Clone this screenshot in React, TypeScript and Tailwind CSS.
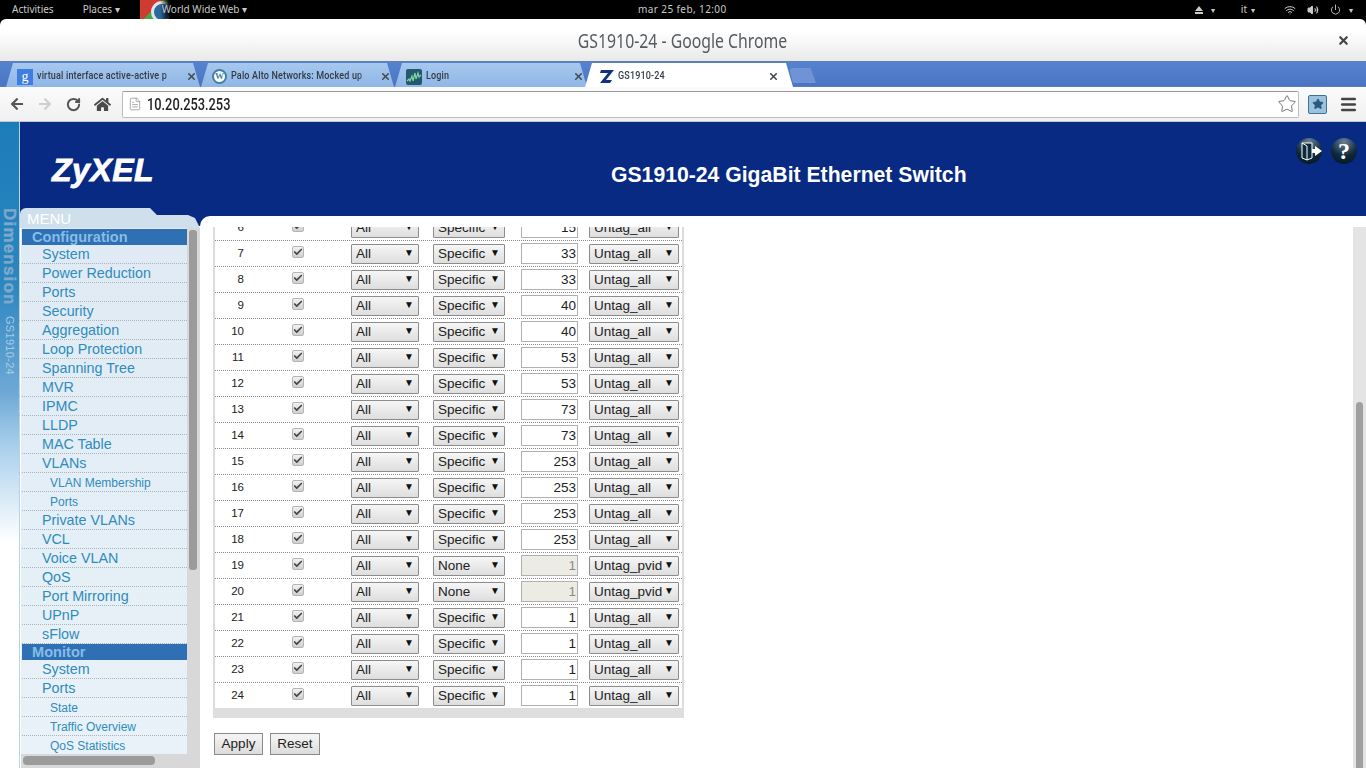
import { Check, FileText, Menu, RotateCw, Star, X, Wifi, Volume2, Power } from "lucide-react";
import { FaArrowLeft, FaArrowRight, FaHome } from "react-icons/fa";

const sans = "font-['Liberation_Sans',Arial,sans-serif]";

const ports = [
  { n: 6, pvid: "15" },
  { n: 7, pvid: "33" },
  { n: 8, pvid: "33" },
  { n: 9, pvid: "40" },
  { n: 10, pvid: "40" },
  { n: 11, pvid: "53" },
  { n: 12, pvid: "53" },
  { n: 13, pvid: "73" },
  { n: 14, pvid: "73" },
  { n: 15, pvid: "253" },
  { n: 16, pvid: "253" },
  { n: 17, pvid: "253" },
  { n: 18, pvid: "253" },
  { n: 19, pvid: "1", none: true },
  { n: 20, pvid: "1", none: true },
  { n: 21, pvid: "1" },
  { n: 22, pvid: "1" },
  { n: 23, pvid: "1" },
  { n: 24, pvid: "1" },
];

const configMenu = [
  { label: "System" },
  { label: "Power Reduction" },
  { label: "Ports" },
  { label: "Security" },
  { label: "Aggregation" },
  { label: "Loop Protection" },
  { label: "Spanning Tree" },
  { label: "MVR" },
  { label: "IPMC" },
  { label: "LLDP" },
  { label: "MAC Table" },
  { label: "VLANs" },
  { label: "VLAN Membership", sub: true },
  { label: "Ports", sub: true },
  { label: "Private VLANs" },
  { label: "VCL" },
  { label: "Voice VLAN" },
  { label: "QoS" },
  { label: "Port Mirroring" },
  { label: "UPnP" },
  { label: "sFlow" },
];

const monitorMenu = [
  { label: "System" },
  { label: "Ports" },
  { label: "State", sub: true },
  { label: "Traffic Overview", sub: true },
  { label: "QoS Statistics", sub: true },
];

function TopBar() {
  return (
    <div className="relative flex h-[19px] shrink-0 items-center bg-black text-[10px] text-[#c9c9c9] font-['Noto_Sans',sans-serif]">
      <span className="ml-3">Activities</span>
      <span className="ml-[29px]">Places ▾</span>
      <div className="relative ml-[20px] h-[19px] w-[30px] overflow-hidden">
        <div className="absolute left-0 top-0 h-full w-full bg-[linear-gradient(135deg,#cf3b30_45%,#45a748_45%)]" />
        <div className="absolute left-[11px] top-[1px] h-[22px] w-[22px] rounded-full border-[3px] border-[#dfe6ea] bg-[#2c6a9c]" />
        <div className="absolute left-[20px] top-0 h-full w-[10px] bg-[linear-gradient(90deg,transparent,#000)]" />
      </div>
      <span className="ml-[-8px] relative">World Wide Web ▾</span>
      <span className="absolute left-[638px] top-[2px] tracking-[0.4px]">mar 25 feb, 12:00</span>
      <div className="ml-auto mr-[13px] flex items-center">
        <svg width="8" height="8" viewBox="0 0 8 8" className="mr-[8px]">
          <path d="M4 0L8 5H0z M0 6h8v2H0z" fill="#c9c9c9" />
        </svg>
        <span className="mr-[26px] text-[8px]">▾</span>
        <span className="mr-[4px]">it</span>
        <span className="mr-[29px] text-[8px]">▾</span>
        <Wifi size={12} className="mr-[11px]" />
        <Volume2 size={12} className="mr-[11px] fill-[#c9c9c9]" />
        <Power size={11} className="mr-[8px]" />
        <span className="text-[8px]">▾</span>
      </div>
    </div>
  );
}

function TitleBar() {
  return (
    <div className="bg-black shrink-0">
      <div className="relative flex h-[42px] items-center justify-center rounded-t-[6px] bg-[linear-gradient(#ffffff_30%,#e9e9e9)]">
        <span className="mt-[2px] text-[20px] text-[#555b5e] font-['Noto_Sans',sans-serif] [transform:scaleX(0.79)]">
          GS1910-24 - Google Chrome
        </span>
        <X size={13} strokeWidth={4} className="absolute right-[16px] top-[15px] text-[#444]" />
      </div>
    </div>
  );
}

function Tab({ title, icon, active, className }: { title: string; icon: React.ReactNode; active?: boolean; className: string }) {
  return (
    <div
      className={`relative flex h-[24px] items-center rounded-t-[5px] pt-[3px] [clip-path:polygon(0_100%,7px_0,calc(100%-7px)_0,100%_100%)] ${className} ${
        active ? "z-10 bg-white" : "bg-[linear-gradient(#a6c8ee,#8fb6e6)]"
      }`}
    >
      {icon}
      <div className="ml-[4px] min-w-0 flex-1 overflow-hidden [mask-image:linear-gradient(90deg,#000_88%,transparent)]">
        <span className="block origin-left whitespace-nowrap text-[11px] font-medium tracking-[0.2px] text-[#333b44] font-['Roboto',sans-serif] [transform:scaleX(0.82)]">
          {title}
        </span>
      </div>
      <X size={11} strokeWidth={3.5} className="ml-[6px] shrink-0 text-[#444c55]" />
    </div>
  );
}

function TabStrip() {
  return (
    <div className="flex h-[26px] shrink-0 items-end gap-[1px] border-t border-[#5d7fa9] bg-[linear-gradient(#5583d0,#4a74c2)] pl-[6px] shadow-[inset_0_-1px_0_#5a7fb8]">
      <Tab
        className="w-[194px] pl-[11px] pr-[3px]"
        title="virtual interface active-active p"
        icon={<span className="flex h-[16px] w-[16px] shrink-0 items-center justify-center bg-[#3f7de0] text-[14px] leading-none text-white font-['Liberation_Serif',serif]">g</span>}
      />
      <Tab
        className="w-[193px] pl-[11px] pr-[3px]"
        title="Palo Alto Networks: Mocked up"
        icon={<span className="flex h-[15px] w-[15px] shrink-0 items-center justify-center rounded-full border-2 border-[#3f7ea6] bg-white text-[9px] font-bold leading-none text-[#3f7ea6] font-['Liberation_Serif',serif]">W</span>}
      />
      <Tab
        className="w-[192px] pl-[11px] pr-[3px]"
        title="Login"
        icon={
          <svg width="16" height="16" viewBox="0 0 16 16" className="shrink-0">
            <rect width="16" height="16" rx="2" fill="#24586e" />
            <path d="M1 12l2-2 1 2 2-5 1 5 2-8 1 6 2-6 1 4 2-2" stroke="#7fd3a0" fill="none" strokeWidth="1.2" />
          </svg>
        }
      />
      <Tab
        active
        className="-ml-[3px] w-[208px] pl-[15px] pr-[14px]"
        title="GS1910-24"
        icon={
          <svg width="14" height="13" viewBox="0 0 14 13" className="shrink-0">
            <path d="M1 0h13l-8 10h6l-2 3H0l8-10H0z" fill="#12327f" />
          </svg>
        }
      />
      <div className="mb-[4px] -ml-[5px] h-[15px] w-[27px] rounded-t-[4px] bg-[#6f93d6] [clip-path:polygon(0_0,80%_0,100%_100%,15%_100%)]" />
    </div>
  );
}

function Toolbar() {
  return (
    <div className="flex h-[35px] shrink-0 items-center border-b border-[#c4c8d0] bg-[linear-gradient(#fbfbfb,#f0f0f0)] pl-[10px] pr-[8px]">
      <FaArrowLeft size={14} className="text-[#555]" />
      <FaArrowRight size={14} className="ml-[14px] text-[#cfcfcf]" />
      <RotateCw size={15} strokeWidth={3.2} className="ml-[14px] text-[#555]" />
      <FaHome size={17} className="ml-[13px] text-[#4a4a4a]" />
      <div className="ml-[11px] flex h-[27px] flex-1 items-center rounded-[2px] border border-[#bdbdbd] border-t-[#9a9a9a] bg-white pl-[5px] pr-[1px]">
        <FileText size={14} strokeWidth={1.2} className="text-[#888]" />
        <span className="ml-[5px] mt-[1px] origin-left text-[16px] font-medium text-[#222] font-['Roboto',sans-serif] [transform:scaleX(0.8)]">10.20.253.253</span>
        <Star size={20} strokeWidth={1.2} className="ml-auto text-[#777]" />
      </div>
      <div className="ml-[9px] flex h-[19px] w-[19px] items-center justify-center rounded-[2px] border border-[#3f7296] bg-[#9cc3dd]">
        <Star size={12} className="fill-[#2b5a80] text-[#2b5a80]" />
      </div>
      <Menu size={19} strokeWidth={3} className="ml-[12px] text-[#444]" />
    </div>
  );
}

function LeftStrip() {
  return (
    <div className="flex w-[20px] shrink-0 flex-col items-center border-r border-[#b7d3e6] bg-[linear-gradient(#1b7db8_0%,#2c86bf_25%,#6fa9d6_42%,#a8cfec_50%,#ffffff_65%)] pt-[86px]">
      <span className={`text-[17px] font-bold leading-none tracking-[1.2px] text-[#7ea8cc] [-webkit-text-stroke:0.4px_#7ea8cc] [writing-mode:vertical-rl] ${sans}`}>Dimension</span>
      <span className={`mt-[10px] text-[11px] leading-none tracking-[0.3px] text-[#a9cbe4] [writing-mode:vertical-rl] ${sans}`}>GS1910-24</span>
    </div>
  );
}

function Header() {
  return (
    <div className="relative flex h-[94px] shrink-0 items-start bg-[#082a82]">
      <span className={`ml-[32px] mt-[29px] text-[32px] font-bold italic leading-[38px] tracking-[0.5px] text-white [-webkit-text-stroke:0.8px_white] ${sans}`}>
        ZyXEL
      </span>
      <span className={`absolute left-[591px] top-[40px] text-[21.2px] font-bold leading-[26px] text-white ${sans}`}>
        GS1910-24 GigaBit Ethernet Switch
      </span>
      <div className="ml-auto mr-[9px] mt-[16px] flex gap-[9px]">
        <div className="relative h-[26px] w-[26px] rounded-full bg-[radial-gradient(circle_at_50%_15%,#6d8296,#0e2a3c_55%,#05131f)]">
          <svg width="26" height="26" viewBox="0 0 26 26" className="absolute left-[1px] top-0">
            <path d="M5 5h10v15l-5 2-5-2z" fill="#0c2a3c" stroke="#fff" strokeWidth="1" />
            <path d="M5 5l5 3v14" fill="none" stroke="#fff" strokeWidth="1" />
            <path d="M15 11h3V8l7 5-7 5v-3h-3z" fill="#fff" />
          </svg>
        </div>
        <div className="flex h-[26px] w-[26px] items-center justify-center rounded-full bg-[radial-gradient(circle_at_50%_15%,#6d8296,#0e2a3c_55%,#05131f)] font-['Liberation_Serif',serif] text-[24px] font-bold leading-none text-white">
          ?
        </div>
      </div>
    </div>
  );
}

function MenuRow({ label, sub }: { label: string; sub?: boolean }) {
  return (
    <div
      className={`flex h-[19px] items-center border-b border-dotted border-[#a9b4bc] ${
        sub ? "pl-[28px] pt-[2px] text-[12px]" : "pl-[20px] pt-[1px] text-[14.3px]"
      } text-[#2f8cbd] whitespace-nowrap`}
    >
      {label}
    </div>
  );
}

function MenuHead({ label }: { label: string }) {
  return <div className="flex h-[16px] items-center bg-[#2f6fb3] pl-[10px] text-[14.6px] font-bold leading-none text-[#85bde8]">{label}</div>;
}

function Sidebar() {
  return (
    <div className={`relative z-10 -mt-[8px] flex h-[560px] w-[180px] shrink-0 flex-col ${sans}`}>
      {/* menu tab */}
      <div className="h-[20px] shrink-0 rounded-tl-[6px] bg-[#cfe0ec] pl-[7px] text-[15px] leading-[21px] text-white [clip-path:polygon(0_0,130px_0,137px_7px,168px_7px,175px_10px,180px_20px,0_20px)]">
        MENU
      </div>
      <div className="flex min-h-0 flex-1 pl-[1px]">
        <div className="flex min-w-0 flex-1 flex-col">
          <div className="flex min-h-0 flex-1">
            <div className="min-h-0 w-[166px] overflow-hidden bg-[linear-gradient(#dfeaf4,#e9f2f8)] pl-[1px] pt-[1px]">
              <MenuHead label="Configuration" />
              {configMenu.map((m, i) => (
                <MenuRow key={i} label={m.label} sub={m.sub} />
              ))}
              <MenuHead label="Monitor" />
              {monitorMenu.map((m, i) => (
                <MenuRow key={i} label={m.label} sub={m.sub} />
              ))}
            </div>
            <div className="flex-1 bg-[#d8d8d8] pl-[2px] pt-[2px]">
              <div className="h-[340px] w-[8px] rounded-[3px] bg-[#9b9b9b]" />
            </div>
          </div>
          <div className="h-[14px] shrink-0 bg-[#d8d8d8] pl-[2px] pt-[2px]">
            <div className="h-[9px] w-[132px] rounded-[4px] bg-[#9b9b9b]" />
          </div>
        </div>
      </div>
    </div>
  );
}

function Sel({ value, options, w }: { value: string; options: string[]; w: string }) {
  return (
    <div className={`relative h-[20px] shrink-0 ${w}`}>
      <select
        defaultValue={value}
        className="block h-full w-full appearance-none rounded-[1px] border border-[#8c8c8c] bg-[linear-gradient(#f6f6f6,#dedede)] pl-[4px] text-[13.5px] leading-[18px] text-[#222] outline-none"
      >
        {options.map((o) => (
          <option key={o}>{o}</option>
        ))}
      </select>
      <span className="pointer-events-none absolute right-[5px] top-[1px] text-[10px] leading-[16px] text-[#111]">▼</span>
    </div>
  );
}

function Row({ n, pvid, none, last }: { n: number; pvid: string; none?: boolean; last?: boolean }) {
  return (
    <div className={`flex items-center ${last ? "h-[25px]" : "h-[26px] border-b border-dotted border-[#8a8a8a]"}`}>
      <span className="w-[29px] shrink-0 text-right text-[11.5px] text-[#222]">{n}</span>
      <div className="mb-[3px] ml-[48px] flex h-[12px] w-[12px] shrink-0 items-center justify-center rounded-[2px] border border-[#b5b5b5] bg-[linear-gradient(#f2f2f2,#cfcfcf)]">
        <Check size={10} strokeWidth={4} className="text-[#444]" />
      </div>
      <div className="ml-[47px]">
        <Sel w="w-[68px]" value="All" options={["All", "Tagged", "Untagged"]} />
      </div>
      <div className="ml-[14px]">
        <Sel w="w-[72px]" value={none ? "None" : "Specific"} options={["None", "Specific"]} />
      </div>
      <input
        readOnly
        disabled={none}
        value={pvid}
        className={`ml-[16px] h-[21px] w-[57px] shrink-0 border border-[#b0b0b0] pr-[1px] text-right text-[13.5px] outline-none ${
          none ? "bg-[#ececE4] text-[#8a8a8a]" : "bg-white text-[#222]"
        }`}
      />
      <div className="ml-[11px]">
        <Sel w="w-[90px]" value={none ? "Untag_pvid" : "Untag_all"} options={["Untag_all", "Untag_pvid"]} />
      </div>
    </div>
  );
}

function Main() {
  return (
    <div className={`relative flex min-w-0 flex-1 rounded-tl-[10px] bg-white pt-[11px] ${sans}`}>
      <div className="flex min-w-0 flex-1 flex-col overflow-hidden pl-[13px]">
        <div className="w-[471px] border-x-2 border-[#dcdcdc] -mt-[12px]">
          {ports.map((p, i) => (
            <Row key={p.n} n={p.n} pvid={p.pvid} none={p.none} last={i === ports.length - 1} />
          ))}
        </div>
        <div className="h-[10px] w-[471px] shrink-0 bg-[#dedede]" />
        <div className="mt-[15px] flex gap-[7px] pl-[1px]">
          <button className="h-[22px] w-[49px] border border-[#8a8a8a] bg-[linear-gradient(#f6f6f6,#dcdcdc)] text-[13.5px] text-[#222]">Apply</button>
          <button className="h-[22px] w-[50px] border border-[#8a8a8a] bg-[linear-gradient(#f6f6f6,#dcdcdc)] text-[13.5px] text-[#222]">Reset</button>
        </div>
      </div>
      <div className="w-[13px] shrink-0 bg-[#e4e4e4] pl-[3px] pt-[175px]">
        <div className="h-full w-[7px] rounded-t-[4px] bg-[#a0a0a0]" />
      </div>
    </div>
  );
}

export default function App() {
  return (
    <div className="flex h-[768px] w-[1366px] flex-col overflow-hidden bg-white">
      <TopBar />
      <TitleBar />
      <TabStrip />
      <Toolbar />
      <div className="flex min-h-0 flex-1">
        <LeftStrip />
        <div className="flex min-w-0 flex-1 flex-col bg-white">
          <Header />
          <div className="flex min-h-0 flex-1 bg-[linear-gradient(#082a82_10px,#ffffff_10px)]">
            <Sidebar />
            <Main />
          </div>
        </div>
      </div>
    </div>
  );
}
